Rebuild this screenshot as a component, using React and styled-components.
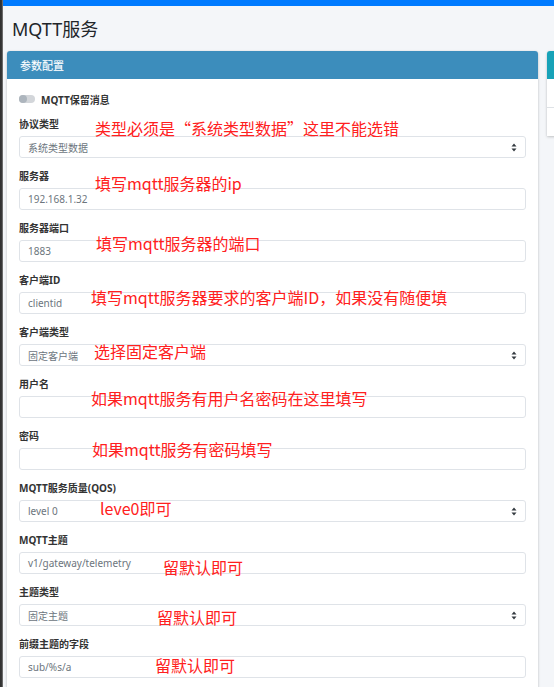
import React from 'react';
import styled, { createGlobalStyle } from 'styled-components';

const GlobalStyle = createGlobalStyle`
  html, body {
    margin: 0;
    padding: 0;
    background: #f4f6f9;
    overflow: hidden;
  }
  body {
    font-family: "Noto Sans", "Noto Sans CJK SC", sans-serif;
  }
`

const Page = styled.div`
  display: flex;
  width: 554px;
  height: 687px;
  overflow: hidden;
`

const Strip = styled.div`
  flex: 0 0 3px;
  background: linear-gradient(to right, #2f2f2f 0, #3a3a3a 2px, #9a9a9a 3px);
`

const Main = styled.div`
  flex: 1;
  min-width: 0;
`

const TopBar = styled.div`
  height: 6px;
  background: #007bff;
`

const Title = styled.h1`
  margin: 0;
  padding: 11px 0 10px 9px;
  font-size: 18px;
  line-height: 24px;
  font-weight: 400;
  color: #212529;
`

const Row = styled.div`
  display: flex;
  gap: 9px;
  padding-left: 4px;
  align-items: flex-start;
`

const Card = styled.div`
  flex: 0 0 ${p => p.width}px;
  background: #fff;
  border-radius: 3px 3px 0 0;
  box-shadow: 0 0 1px rgba(0, 0, 0, 0.13), 0 1px 3px rgba(0, 0, 0, 0.2);
  overflow: hidden;
`

const CardHeader = styled.div`
  height: 28px;
  display: flex;
  align-items: center;
  padding-left: 13px;
  background: ${p => p.color};
  color: #fff;
  font-size: 11px;
  text-shadow: 0 0 1px rgba(255, 255, 255, 0.4);
`

const CardBody = styled.div`
  padding: 13px 12px 0;
  height: 620px;
`

const SideItem = styled.div`
  height: 28px;
  border-top: ${p => (p.first ? 'none' : '1px solid #dee2e6')};
`

const Switch = styled.div`
  display: flex;
  align-items: center;
  gap: 6px;
  height: 14px;
  margin-bottom: 11px;
  font-size: 10px;
  font-weight: 700;
  color: #333;
`

const Track = styled.span`
  position: relative;
  width: 16px;
  height: 8px;
  border-radius: 4px;
  background: #d3d6da;
  &::after {
    content: '';
    position: absolute;
    left: 0;
    top: 0;
    width: 8px;
    height: 8px;
    border-radius: 50%;
    background: #adb5bd;
  }
`

const Group = styled.div`
  position: relative;
  margin-bottom: 11px;
`

const Label = styled.label`
  display: block;
  height: 14px;
  line-height: 14px;
  margin-bottom: 5px;
  font-size: 10px;
  font-weight: 700;
  color: #333;
`

const Field = styled.div`
  position: relative;
  box-sizing: border-box;
  height: 22px;
  display: flex;
  align-items: center;
  padding-left: 8px;
  border: 1px solid #dfe3e8;
  border-radius: 3px;
  background: #fff;
  font-size: 10px;
  color: #6c757d;
`

const Caret = styled.svg`
  position: absolute;
  right: 8px;
  top: 6px;
`

const Note = styled.div`
  position: absolute;
  left: ${p => p.x}px;
  top: ${p => p.y}px;
  font-family: "Noto Sans CJK SC", sans-serif;
  font-size: 16px;
  line-height: 22px;
  color: #ff2020;
  white-space: nowrap;
  pointer-events: none;
`

const fields = [
  { label: '协议类型', value: '系统类型数据', select: true, note: '类型必须是“系统类型数据”这里不能选错', x: 76, y: 0 },
  { label: '服务器', value: '192.168.1.32', note: '填写mqtt服务器的ip', x: 76, y: 3 },
  { label: '服务器端口', value: '1883', note: '填写mqtt服务器的端口', x: 77, y: 11 },
  { label: '客户端ID', value: 'clientid', note: '填写mqtt服务器要求的客户端ID，如果没有随便填', x: 72, y: 13 },
  { label: '客户端类型', value: '固定客户端', select: true, note: '选择固定客户端', x: 75, y: 15 },
  { label: '用户名', value: '', note: '如果mqtt服务有用户名密码在这里填写', x: 72, y: 10 },
  { label: '密码', value: '', note: '如果mqtt服务有密码填写', x: 73, y: 9 },
  { label: 'MQTT服务质量(QOS)', value: 'level 0', select: true, note: 'leve0即可', x: 81, y: 16 },
  { label: 'MQTT主题', value: 'v1/gateway/telemetry', note: '留默认即可', x: 144, y: 23 },
  { label: '主题类型', value: '固定主题', select: true, note: '留默认即可', x: 138, y: 21 },
  { label: '前缀主题的字段', value: 'sub/%s/a', note: '留默认即可', x: 136, y: 17 },
];

const SelectCaret = () => (
  <Caret width="6" height="9" viewBox="0 0 6 9">
    <path d="M3 0.5 L5.5 3.5 H0.5 Z M3 8.5 L5.5 5.5 H0.5 Z" fill="#343a40" />
  </Caret>
);

const App = () => {
  return (
    <Page>
      <GlobalStyle />
      <Strip />
      <Main>
        <TopBar />
        <Title>MQTT服务</Title>
        <Row>
          <Card width={531}>
            <CardHeader color="#3c8dbc">参数配置</CardHeader>
            <CardBody>
              <Switch>
                <Track />
                MQTT保留消息
              </Switch>
              {fields.map(f => (
                <Group key={f.label}>
                  <Label>{f.label}</Label>
                  <Field>
                    {f.value}
                    {f.select && <SelectCaret />}
                  </Field>
                  <Note x={f.x} y={f.y}>{f.note}</Note>
                </Group>
              ))}
            </CardBody>
          </Card>
          <Card width={200}>
            <CardHeader color="#17a2b8" />
            <SideItem first />
            <SideItem />
          </Card>
        </Row>
      </Main>
    </Page>
  );
};

export default App;
